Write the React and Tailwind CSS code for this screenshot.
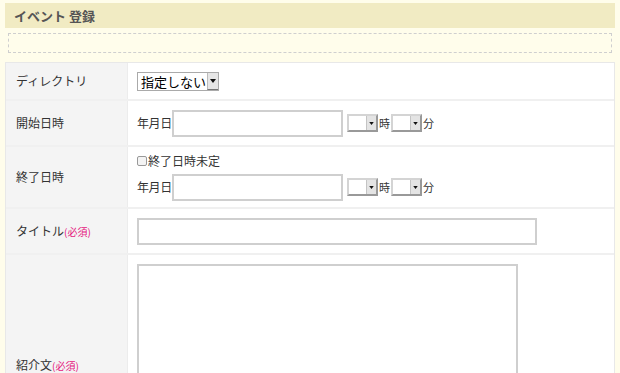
import React from "react";

const font = { fontFamily: '"Noto Sans CJK JP", "Noto Sans", sans-serif' };

function Sel({ label, w }) {
  return (
    <div className={`flex h-[19px] items-stretch border border-[#aaa] bg-white ${w}`}>
      <div className="flex-1 flex items-center pl-[3px] text-[13px] leading-none text-black whitespace-nowrap">{label}</div>
      <div className="w-[11px] shrink-0 flex items-center justify-center bg-[#e6e6e6] border-l border-[#bbb] border-b border-b-[#777]">
        <svg width="6" height="4" viewBox="0 0 6 4"><path d="M0 0H6L3 4Z" fill="#111" /></svg>
      </div>
    </div>
  );
}

function SmallSel() {
  return (
    <div className="flex h-[18px] w-[31px] shrink-0 items-stretch border-2 border-[#d4d4d4] border-r-[#999] border-b-[#999] bg-white">
      <div className="flex-1" />
      <div className="w-[10px] flex items-center justify-center bg-[#e4e4e4] border-l border-[#c4c4c4]">
        <svg width="5" height="3" viewBox="0 0 6 4"><path d="M0 0H6L3 4Z" fill="#111" /></svg>
      </div>
    </div>
  );
}

function DateLine() {
  return (
    <div className="flex items-center text-[12px] text-[#333] whitespace-nowrap">
      <span className="w-[35px] shrink-0 tracking-[-0.4px]">年月日</span>
      <div className="w-[171px] shrink-0 h-[27px] border-2 border-[#cfcfcf] bg-white" />
      <div className="ml-[4px]"><SmallSel /></div>
      <span className="text-[11px] ml-[1px]">時</span>
      <div className="ml-[1px]"><SmallSel /></div>
      <span className="text-[11px] ml-[1px]">分</span>
    </div>
  );
}

function Row({ label, req, children, className = "" }) {
  return (
    <div className={`flex border-b-2 border-[#f0f0f0] ${className}`}>
      <div className="w-[122px] shrink-0 bg-[#f4f4f4] flex items-center pl-[10px] text-[12px] text-[#333] border-r border-[#ececec] whitespace-nowrap">
        <span>{label}</span>
        {req && <span className="text-[10px] text-[#e5177e]">(必須)</span>}
      </div>
      <div className="flex-1 bg-white pl-[9px] flex items-center">{children}</div>
    </div>
  );
}

export default function App() {
  return (
    <div style={font} className="w-[620px] h-[373px] overflow-hidden bg-[#fffdeb] pt-[3px]">
      <div className="mx-[5px] h-[25px] bg-[#f1ebc3] flex items-center pl-[9px] text-[13px] font-bold text-[#555]">
        イベント 登録
      </div>
      <div className="mx-[8px] mt-[5px] h-[20px] border border-dashed border-[#cfcfcf]" />
      <div className="mx-[5px] mt-[9px] border border-[#e8e8e8] border-b-0 bg-white">
        <Row label="ディレクトリ" className="h-[38px]">
          <div className="pt-[1px]"><Sel label="指定しない" w="w-[82px]" /></div>
        </Row>
        <Row label="開始日時" className="h-[46px]">
          <DateLine />
        </Row>
        <Row label="終了日時" className="h-[62px]">
          <div className="flex flex-col">
            <div className="flex items-center text-[12px] text-[#333] h-[14px] mb-[6px] whitespace-nowrap">
              <span className="w-[10px] h-[10px] border border-[#999] rounded-[2px] bg-[#f4f4f4] mr-[1px]" />
              終了日時未定
            </div>
            <DateLine />
          </div>
        </Row>
        <Row label="タイトル" req className="h-[46px]">
          <div className="w-[400px] h-[27px] border-2 border-[#cfcfcf] bg-white" />
        </Row>
        <div className="flex h-[220px]">
          <div className="w-[122px] shrink-0 bg-[#f4f4f4] pl-[10px] pt-[101px] text-[12px] text-[#333] border-r border-[#ececec] whitespace-nowrap">
            <span>紹介文</span>
            <span className="text-[10px] text-[#e5177e]">(必須)</span>
          </div>
          <div className="flex-1 bg-white pl-[9px] pt-[9px]">
            <div className="w-[381px] h-[200px] border-2 border-[#cfcfcf] bg-white" />
          </div>
        </div>
      </div>
    </div>
  );
}
